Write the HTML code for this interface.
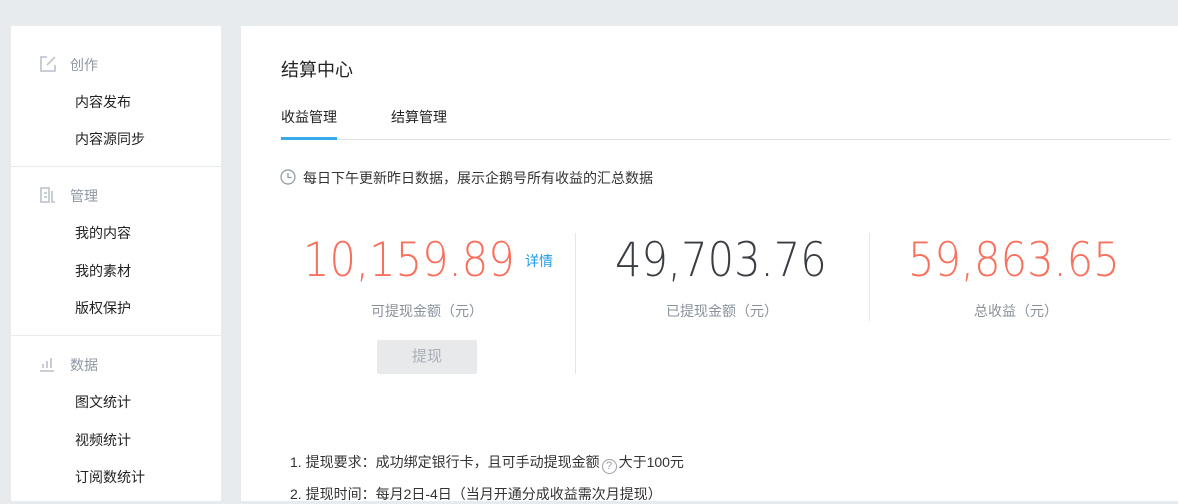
<!DOCTYPE html>
<html><head><meta charset="utf-8"><style>
*{margin:0;padding:0;box-sizing:border-box}
body{width:1178px;height:501px;overflow:hidden;background:#e8ebee;font-family:"Liberation Sans","Noto Sans CJK SC",sans-serif;position:relative}
.a{position:absolute;white-space:nowrap}
.side{position:absolute;left:11px;top:26px;width:210px;height:475px;background:#fff}
.main{position:absolute;left:241px;top:26px;width:937px;height:475px;background:#fff}
.h{color:#8f97a3;font-size:14px;left:70px}
.it{color:#222;font-size:14px;left:75px}
.dv{position:absolute;left:11px;width:210px;height:1px;background:#e8ebee}
.num{font-family:"DejaVu Sans",sans-serif;font-size:47px;font-weight:200;line-height:1;transform:scaleX(0.885);transform-origin:0 0}
.lab{color:#8a919b;font-size:14px}
</style></head><body>
<div class="side"></div>
<div class="main"></div>
<svg class="a" style="left:39px;top:55px" width="18" height="18" viewBox="0 0 18 18" fill="none" stroke="#c3c8d0" stroke-width="1.8"><path d="M8 2H2v14h14v-6"/><path d="M8 10L16 2"/></svg>
<div class="a h" style="top:55px">创作</div>
<div class="a it" style="top:92px">内容发布</div>
<div class="a it" style="top:129px">内容源同步</div>
<div class="dv" style="top:166px"></div>
<svg class="a" style="left:39px;top:186px" width="18" height="18" viewBox="0 0 18 18" fill="none" stroke="#c3c8d0" stroke-width="1.8"><path d="M2 2h8v14H2z"/><path d="M5 7h3M5 11h3M13 5v11h3"/></svg>
<div class="a h" style="top:186px">管理</div>
<div class="a it" style="top:223px">我的内容</div>
<div class="a it" style="top:261px">我的素材</div>
<div class="a it" style="top:298px">版权保护</div>
<div class="dv" style="top:335px"></div>
<svg class="a" style="left:39px;top:355px" width="18" height="18" viewBox="0 0 18 18" fill="none" stroke="#c3c8d0" stroke-width="1.8"><path d="M1 16h14M4 9v4M8 6v7M12 3v10"/></svg>
<div class="a h" style="top:355px">数据</div>
<div class="a it" style="top:392px">图文统计</div>
<div class="a it" style="top:430px">视频统计</div>
<div class="a it" style="top:467px">订阅数统计</div>

<div class="a" style="left:281px;top:56px;font-size:18px;color:#222">结算中心</div>
<div class="a" style="left:281px;top:107px;font-size:14px;color:#222">收益管理</div>
<div class="a" style="left:391px;top:107px;font-size:14px;color:#222">结算管理</div>
<div class="a" style="left:281px;top:139px;width:889px;height:1px;background:#e0e0e0"></div>
<div class="a" style="left:281px;top:137px;width:56px;height:3px;background:#36aaea"></div>
<svg class="a" style="left:280px;top:169px" width="16" height="16" viewBox="0 0 16 16" fill="none" stroke="#8f97a3" stroke-width="1.2"><circle cx="8" cy="8" r="7"/><path d="M8 4v4.5h3.5"/></svg>
<div class="a" style="left:303px;top:168px;font-size:14px;color:#333">每日下午更新昨日数据，展示企鹅号所有收益的汇总数据</div>

<div class="a num" style="left:303px;top:237px;color:#f8705e">10,159.89</div>
<div class="a" style="left:525px;top:251px;font-size:14px;color:#1e9be8">详情</div>
<div class="a lab" style="left:371px;top:301px">可提现金额（元）</div>
<div class="a" style="left:377px;top:340px;width:100px;height:34px;background:#e8e9eb;border-radius:2px;color:#a9aeb5;font-size:15px;text-align:center;line-height:34px">提现</div>
<div class="a" style="left:575px;top:233px;width:1px;height:141px;background:#e4e6e8"></div>
<div class="a num" style="left:615px;top:237px;color:#3a3e44">49,703.76</div>
<div class="a lab" style="left:666px;top:301px">已提现金额（元）</div>
<div class="a" style="left:869px;top:233px;width:1px;height:88px;background:#e4e6e8"></div>
<div class="a num" style="left:908px;top:237px;color:#f8705e">59,863.65</div>
<div class="a lab" style="left:974px;top:301px">总收益（元）</div>

<div class="a" style="left:290px;top:452px;font-size:14px;color:#333">1. 提现要求：成功绑定银行卡，且可手动提现金额<span style="display:inline-block;width:15px;height:15px;border:1px solid #9aa0a8;border-radius:50%;font-size:11px;line-height:13px;text-align:center;color:#9aa0a8;vertical-align:-2px;margin:0 2px">?</span>大于100元</div>
<div class="a" style="left:290px;top:484px;font-size:14px;color:#333">2. 提现时间：每月2日-4日（当月开通分成收益需次月提现）</div>
</body></html>
